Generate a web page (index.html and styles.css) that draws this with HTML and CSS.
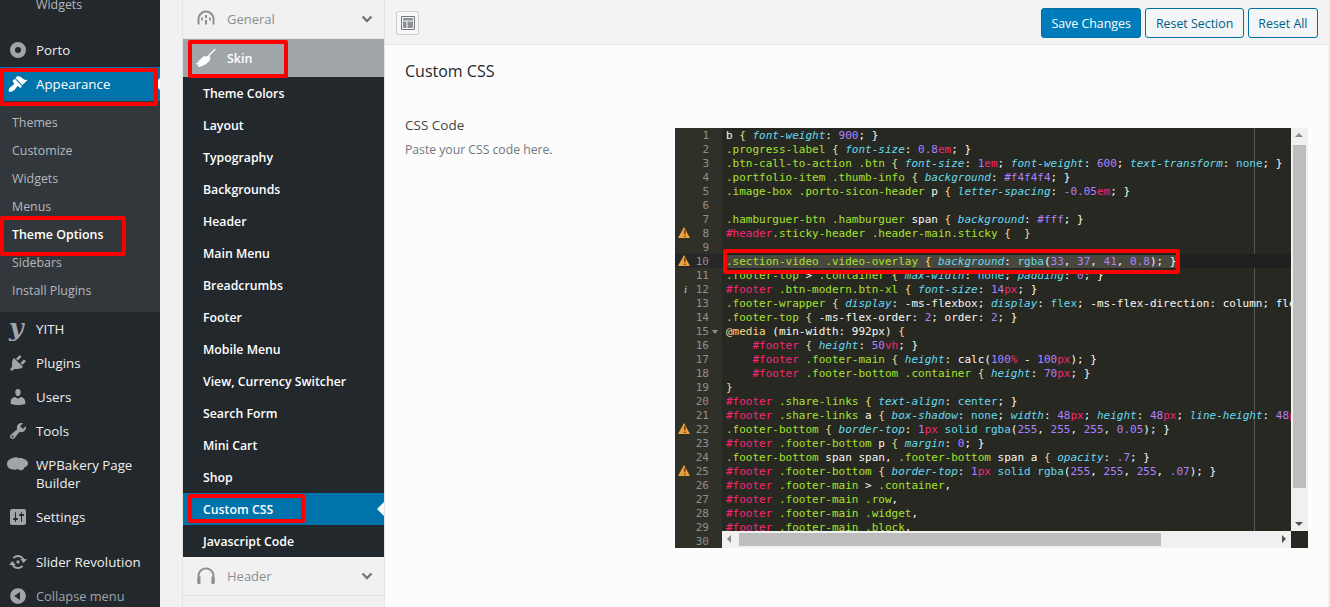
FILE: index.html
```html
<!DOCTYPE html>
<html lang="en">
<head>
  <meta charset="UTF-8">
  <title>Theme Options - Custom CSS</title>
  <link rel="stylesheet" href="styles.css">
</head>
<body>
  <nav class="adminmenu">
    <a class="sub-item sub-clip">Widgets</a>
    <div class="menu-sep"></div>
    <a class="menu-item"><svg class="mi" viewBox="0 0 20 20"><path fill-rule="evenodd" d="M10 2a8 8 0 1 1 0 16 8 8 0 0 1 0-16zm0 5a3 3 0 1 0 0 6 3 3 0 0 0 0-6z"/></svg>Porto</a>
    <a class="menu-item current"><svg class="mi" viewBox="0 0 20 20"><path d="M14.48 11.06L7.41 3.99l1.5-1.5c.5-.56 2.3-.47 3.51.32 1.21.8 1.43 1.28 2.91 2.1 1.18.64 2.45 1.26 4.45.85zm-.71.71L6.7 4.7 4.93 6.47c-.39.39-.39 1.02 0 1.41l1.06 1.06c.39.39.39 1.03 0 1.42-.6.6-1.43 1.11-2.21 1.69-.35.26-.7.53-1.01.84C1.43 13.23 0 16.53 1 17.53s4.3-.44 5.65-1.77c.31-.31.58-.66.84-1.01.58-.78 1.09-1.61 1.69-2.21.39-.39 1.03-.39 1.42 0l1.06 1.06c.39.39 1.02.39 1.41 0z"/></svg>Appearance</a>
    <div class="submenu">
      <a class="sub-item">Themes</a>
      <a class="sub-item">Customize</a>
      <a class="sub-item">Widgets</a>
      <a class="sub-item">Menus</a>
      <a class="sub-item active">Theme Options</a>
      <a class="sub-item">Sidebars</a>
      <a class="sub-item">Install Plugins</a>
    </div>
    <a class="menu-item"><span class="yith-icon">y</span>YITH</a>
    <a class="menu-item"><svg class="mi" viewBox="0 0 20 20"><path d="M13.11 4.36L9.87 7.6 8 5.73l3.24-3.24c.35-.34 1.05-.2 1.56.32.52.51.66 1.21.31 1.55zm-8 1.77l.91-1.12 9.01 9.01-1.19.84c-.71.71-2.63 1.16-3.82 1.16H6.14L4.9 17.26c-.59.59-1.54.59-2.12 0-.59-.58-.59-1.53 0-2.12l1.24-1.24v-3.88c0-1.13.4-3.19 1.09-3.89zm7.26 3.97l3.24-3.24c.34-.35 1.04-.21 1.55.31.52.51.66 1.21.31 1.55l-3.24 3.25z"/></svg>Plugins</a>
    <a class="menu-item"><svg class="mi" viewBox="0 0 20 20"><path d="M10 9.25c-2.27 0-2.73-3.44-2.73-3.44C7 4.02 7.82 2 9.97 2c2.16 0 2.98 2.02 2.71 3.81 0 0-.41 3.44-2.68 3.44zm0 2.57L12.72 10c2.39 0 4.52 2.33 4.52 4.53v2.49s-3.65 1.13-7.24 1.13c-3.65 0-7.24-1.13-7.24-1.13v-2.49c0-2.25 1.94-4.48 4.47-4.48z"/></svg>Users</a>
    <a class="menu-item"><svg class="mi" viewBox="0 0 20 20"><path d="M16.68 9.77c-1.34 1.34-3.3 1.67-4.95.99l-5.41 6.52c-.99.99-2.59.99-3.58 0s-.99-2.59 0-3.57l6.52-5.42c-.68-1.65-.35-3.61.99-4.95 1.28-1.28 3.12-1.62 4.72-1.06l-2.89 2.89 2.82 2.82 2.86-2.87c.53 1.58.18 3.39-1.08 4.65zM3.81 16.21c.4.39 1.04.39 1.43 0 .4-.4.4-1.04 0-1.43-.39-.4-1.03-.4-1.43 0-.39.39-.39 1.03 0 1.43z"/></svg>Tools</a>
    <a class="menu-item"><svg class="mi mi-wide" viewBox="0 0 22 20"><path d="M6 3c2-1.200 4.500-1 6 .3 1.500-.6 3.500-.5 4.500.7 2.500.3 4.500 2 4.500 4.300 0 2.200-1.500 3.700-3.500 4-.3 1.800-1.700 3-3.500 3-1.300 0-2.300-.5-3-1.500C9.500 14.800 8 15 6.500 14.500 3 14.500 0 12.300 0 9s3-5.500 6-6z"/></svg><span>WPBakery Page Builder</span></a>
    <a class="menu-item"><svg class="mi" viewBox="0 0 20 20"><path d="M18 16V4c0-1.100-.9-2-2-2H4c-1.100 0-2 .9-2 2v12c0 1.100.9 2 2 2h12c1.100 0 2-.9 2-2zM8 11h1c.55 0 1 .45 1 1s-.45 1-1 1H8v1.500c0 .28-.22.5-.5.5s-.5-.22-.5-.5V13H6c-.55 0-1-.45-1-1s.45-1 1-1h1V5.500c0-.28.22-.5.5-.5s.5.22.5.5V11zm5-2h-1c-.55 0-1-.45-1-1s.45-1 1-1h1V5.500c0-.28.22-.5.5-.5s.5.22.5.5V7h1c.55 0 1 .45 1 1s-.45 1-1 1h-1v5.500c0 .28-.22.5-.5.5s-.5-.22-.5-.5V9z"/></svg>Settings</a>
    <div class="menu-sep short"></div>
    <a class="menu-item"><svg class="mi mi-wide" viewBox="0 0 22 20"><path d="M11 3c2.800 0 5.200 1.700 6.200 4.100H20l-3.400 4-3.400-4h1.700C14.100 5.800 12.700 5 11 5 9.500 5 8.200 5.700 7.400 6.800L5.700 5.500C7 3.900 8.900 3 11 3zM5.400 8.900l3.400 4H7.100C7.900 14.200 9.300 15 11 15c1.500 0 2.800-.7 3.600-1.800l1.700 1.300C15 16.100 13.100 17 11 17c-2.800 0-5.200-1.700-6.200-4.100H2l3.400-4zM11 8.300a1.700 1.700 0 1 1 0 3.400 1.700 1.700 0 0 1 0-3.400z"/></svg>Slider Revolution</a>
    <a class="menu-item collapse"><svg class="mi" viewBox="0 0 20 20"><path d="M10 2.160c4.330 0 7.840 3.510 7.840 7.840s-3.510 7.840-7.840 7.840S2.160 14.330 2.160 10 5.710 2.160 10 2.160zm2 11.720V6.120L6.180 9.970z"/></svg>Collapse menu</a>
  </nav>

  <div class="wrap">
    <aside class="panel">
      <div class="group-head">
        <svg class="gi" viewBox="0 0 20 20"><path d="M1.500 15.500V10a8.500 8.500 0 0 1 17 0v5.500h-2V10a6.500 6.500 0 0 0-13 0v5.500zM9 6h2v3H9zM9 11h2v4.500H9zM5.200 8.500h1.800v3H5.200zM13 8.500h1.800v3H13z"/></svg>
        <span class="group-name">General</span>
        <svg class="chev" viewBox="0 0 12 8"><path d="M1.500 1.500L6 6l4.500-4.500" fill="none" stroke-width="2.400"/></svg>
      </div>
      <div class="group-head open">
        <svg class="gi" viewBox="0 0 20 20"><path d="M19 .5l.8.9-6.400 6.700c1 1.500 1.200 3 .4 4.400C12 15 8 17.500 3.500 19c-.7-.1-1.500-.5-2-1 1-.7 2-1.500 2.800-2.400-1 .7-2.200 1.200-3.300 1.400-.5-.6-.8-1.300-.9-2 1.500-.2 3-1 4-2-1 .4-2 .6-3 .5 2-.8 3.700-2.300 5-4 1.300-1.300 3-1.600 4.500-.8z"/></svg>
        <span class="group-name">Skin</span>
      </div>
      <ul class="sections">
        <li>Theme Colors</li>
        <li>Layout</li>
        <li>Typography</li>
        <li>Backgrounds</li>
        <li>Header</li>
        <li>Main Menu</li>
        <li>Breadcrumbs</li>
        <li>Footer</li>
        <li>Mobile Menu</li>
        <li>View, Currency Switcher</li>
        <li>Search Form</li>
        <li>Mini Cart</li>
        <li>Shop</li>
        <li class="active">Custom CSS</li>
        <li>Javascript Code</li>
      </ul>
      <div class="group-head">
        <svg class="gi" viewBox="0 0 20 20"><path d="M10 1.500c-4.700 0-8.500 3.600-8.500 8.500v2h-.3v4.500c0 .8.700 1.500 1.500 1.500h1.800v-7.500h-1V10c0-3.800 2.900-6.500 6.500-6.500s6.500 2.700 6.500 6.500v.500h-1V18h1.800c.8 0 1.500-.7 1.500-1.500V12h-.3v-2c0-4.900-3.800-8.500-8.500-8.500z"/></svg>
        <span class="group-name">Header</span>
        <svg class="chev" viewBox="0 0 12 8"><path d="M1.500 1.500L6 6l4.500-4.500" fill="none" stroke-width="2.400"/></svg>
      </div>
    </aside>

    <main class="main">
      <div class="toolbar">
        <span class="layout-btn"><svg viewBox="0 0 14 14"><path d="M.5.5h13v13H.5z" fill="none" stroke="#72777c"/><path d="M2 2h10v2.500H2zM2 5.500h3.500V12H2zM6.500 5.500H12V12H6.500z" fill="#8d9195"/></svg></span>
        <div class="actions">
          <button class="btn primary">Save Changes</button>
          <button class="btn">Reset Section</button>
          <button class="btn">Reset All</button>
        </div>
      </div>
      <div class="content">
        <h2>Custom CSS</h2>
        <div class="field">
          <div class="field-label">
            <h3>CSS Code</h3>
            <p>Paste your CSS code here.</p>
          </div>
          <div class="editor">
            <div class="gutter">
              <div>1</div><div>2</div><div>3</div><div>4</div><div>5</div><div>6</div><div>7</div>
              <div class="warn">8</div><div>9</div><div class="warn cur">10</div><div>11</div>
              <div class="info">12</div><div>13</div><div>14</div><div class="fold">15</div>
              <div>16</div><div>17</div><div>18</div><div>19</div><div>20</div><div>21</div>
              <div class="warn">22</div><div>23</div><div>24</div><div class="warn">25</div>
              <div>26</div><div>27</div><div>28</div><div>29</div><div>30</div>
            </div>
            <div class="code">
              <div class="print-margin"></div>
              <div class="ln">b <b>{</b> <em>font-weight</em>: <u>900</u>; }</div>
              <div class="ln"><s>.progress-label</s> <b>{</b> <em>font-size</em>: <u>0.8</u><i>em</i>; }</div>
              <div class="ln"><s>.btn-call-to-action</s> <s>.btn</s> <b>{</b> <em>font-size</em>: <u>1</u><i>em</i>; <em>font-weight</em>: <u>600</u>; <em>text-transform</em>: <var>none</var>; }</div>
              <div class="ln"><s>.portfolio-item</s> <s>.thumb-info</s> <b>{</b> <em>background</em>: <u>#f4f4f4</u>; }</div>
              <div class="ln"><s>.image-box</s> <s>.porto-sicon-header</s> p <b>{</b> <em>letter-spacing</em>: <u>-0.05</u><i>em</i>; }</div>
              <div class="ln"> </div>
              <div class="ln"><s>.hamburguer-btn</s> <s>.hamburguer</s> span <b>{</b> <em>background</em>: <u>#fff</u>; }</div>
              <div class="ln"><i>#header</i><s>.sticky-header</s> <s>.header-main.sticky</s> <b>{</b>  <b>}</b></div>
              <div class="ln"> </div>
              <div class="ln cur"><span class="sel"><s>.section-video</s> <s>.video-overlay</s> <b>{</b> <em>background</em>: <var>rgba</var>(<u>33</u>, <u>37</u>, <u>41</u>, <u>0.8</u>); }</span></div>
              <div class="ln"><s>.footer-top</s> &gt; <s>.container</s> <b>{</b> <em>max-width</em>: <var>none</var>; <em>padding</em>: <u>0</u>; }</div>
              <div class="ln"><i>#footer</i> <s>.btn-modern.btn-xl</s> <b>{</b> <em>font-size</em>: <u>14</u><i>px</i>; }</div>
              <div class="ln"><s>.footer-wrapper</s> <b>{</b> <em>display</em>: -ms-flexbox; <em>display</em>: <var>flex</var>; -ms-flex-direction: column; fle</div>
              <div class="ln"><s>.footer-top</s> <b>{</b> -ms-flex-order: <u>2</u>; order: <u>2</u>; }</div>
              <div class="ln"><b>@media</b> (min-width: 992px) <b>{</b></div>
              <div class="ln">    <i>#footer</i> <b>{</b> <em>height</em>: <u>50</u><i>vh</i>; }</div>
              <div class="ln">    <i>#footer</i> <s>.footer-main</s> <b>{</b> <em>height</em>: calc(<u>100</u><i>%</i> - <u>100</u><i>px</i>); }</div>
              <div class="ln">    <i>#footer</i> <s>.footer-bottom</s> <s>.container</s> <b>{</b> <em>height</em>: <u>70</u><i>px</i>; }</div>
              <div class="ln"><b>}</b></div>
              <div class="ln"><i>#footer</i> <s>.share-links</s> <b>{</b> <em>text-align</em>: <var>center</var>; }</div>
              <div class="ln"><i>#footer</i> <s>.share-links</s> a <b>{</b> <em>box-shadow</em>: <var>none</var>; <em>width</em>: <u>48</u><i>px</i>; <em>height</em>: <u>48</u><i>px</i>; <em>line-height</em>: <u>48</u><i>p</i></div>
              <div class="ln"><s>.footer-bottom</s> <b>{</b> <em>border-top</em>: <u>1</u><i>px</i> <var>solid</var> <var>rgba</var>(<u>255</u>, <u>255</u>, <u>255</u>, <u>0.05</u>); }</div>
              <div class="ln"><i>#footer</i> <s>.footer-bottom</s> p <b>{</b> <em>margin</em>: <u>0</u>; }</div>
              <div class="ln"><s>.footer-bottom</s> span span, <s>.footer-bottom</s> span a <b>{</b> <em>opacity</em>: <u>.7</u>; }</div>
              <div class="ln"><i>#footer</i> <s>.footer-bottom</s> <b>{</b> <em>border-top</em>: <u>1</u><i>px</i> <var>solid</var> <var>rgba</var>(<u>255</u>, <u>255</u>, <u>255</u>, <u>.07</u>); }</div>
              <div class="ln"><i>#footer</i> <s>.footer-main</s> &gt; <s>.container</s>,</div>
              <div class="ln"><i>#footer</i> <s>.footer-main</s> <s>.row</s>,</div>
              <div class="ln"><i>#footer</i> <s>.footer-main</s> <s>.widget</s>,</div>
              <div class="ln"><i>#footer</i> <s>.footer-main</s> <s>.block</s>,</div>
            </div>
            <div class="vbar"><span class="arrow up"></span><span class="thumb"></span><span class="arrow down"></span></div>
            <div class="hbar"><span class="arrow left"></span><span class="thumb"></span><span class="arrow right"></span></div>
            <div class="corner"></div>
          </div>
        </div>
      </div>
    </main>
  </div>

  <div class="mark mark-appearance"></div>
  <div class="mark mark-options"></div>
  <div class="mark mark-skin"></div>
  <div class="mark mark-custom"></div>
  <div class="mark mark-line"></div>
</body>
</html>
```

FILE: styles.css
```css
html, body {
  height: 607px;
  margin: 0;
  overflow: hidden;
}
body {
  display: flex;
  position: relative;
  font-family: "Open Sans", sans-serif;
  background: #f1f1f1;
}

/* admin menu */
.adminmenu {
  width: 160px;
  flex: none;
  margin-top: -9px;
  background: #23282d;
  font-size: 13.3px;
  line-height: 18px;
}
.menu-item {
  display: flex;
  padding: 8px 0 8px 36px;
  position: relative;
  color: #eee;
}
.menu-item .mi {
  position: absolute;
  left: 8px;
  top: 7px;
  width: 20px;
  height: 20px;
  fill: #a0a5aa;
}
.menu-item .mi-wide {
  width: 22px;
  left: 7px;
}
.menu-item.current {
  background: #0073aa;
  color: #fff;
}
.menu-item.current .mi {
  fill: #fff;
}
.menu-item.current::after {
  content: "";
  position: absolute;
  right: 0;
  top: 11px;
  border: 6px solid transparent;
  border-right-color: #fff;
  border-left-width: 0;
}
.menu-item.collapse {
  color: #a0a5aa;
  font-size: 12.8px;
}
.yith-icon {
  position: absolute;
  left: 9px;
  top: 3px;
  font: italic bold 25px/26px "DejaVu Serif", serif;
  color: #a0a5aa;
}
.menu-sep {
  height: 14px;
}
.menu-sep.short {
  height: 11px;
}
.submenu {
  background: #32373c;
  padding: 8px 0 7px;
}
.sub-item {
  display: block;
  padding: 5px 12px;
  color: #b4b9be;
  font-size: 12.4px;
}
.sub-item.sub-clip {
  padding-left: 36px;
}
.sub-item.active {
  color: #fff;
  font-weight: 600;
}

/* options panel */
.wrap {
  flex: 1;
  display: flex;
  padding-left: 23px;
}
.panel {
  width: 201px;
  flex: none;
  background: #f1f1f1;
  border-left: 1px solid #e2e2e2;
  margin-left: -1px;
}
.group-head {
  display: flex;
  align-items: center;
  height: 38px;
  padding: 0 11px 0 6px;
  border-bottom: 1px solid #e5e5e5;
  color: #8b8f93;
  font-size: 13px;
}
.group-head.open {
  border-bottom: 0;
  background: #a0a5a9;
  color: #fff;
  font-weight: 600;
  font-size: 12.5px;
}
.group-name {
  margin-left: 11px;
  flex: 1;
}
.gi {
  width: 20px;
  height: 20px;
  fill: #8b8f93;
  margin-left: 7px;
  flex: none;
}
.open .gi {
  fill: #fff;
}
.chev {
  width: 12px;
  height: 8px;
  stroke: #72777c;
  flex: none;
}
.sections {
  list-style: none;
  margin: 0;
  padding: 0;
  background: #23282d;
}
.sections li {
  height: 32px;
  padding-left: 20px;
  line-height: 34px;
  color: #fff;
  font-size: 12.3px;
  font-weight: 600;
  position: relative;
}
.sections li.active {
  background: #0073aa;
}
.sections li.active::after {
  content: "";
  position: absolute;
  right: 0;
  top: 9px;
  border: 7px solid transparent;
  border-right-color: #fcfcfc;
  border-left-width: 0;
}

/* main */
.main {
  flex: 1;
  background: #fcfcfc;
  border-left: 1px solid #e5e5e5;
  border-right: 1px solid #eee;
  margin-right: 1px;
}
.toolbar {
  display: flex;
  justify-content: space-between;
  align-items: center;
  height: 42px;
  padding: 2px 10px 0 11px;
  background: #f3f3f3;
  border-bottom: 1px solid #e5e5e5;
}
.layout-btn {
  display: flex;
  align-items: center;
  justify-content: center;
  width: 21px;
  height: 22px;
  border: 1px solid #cfcfcf;
  border-radius: 2px;
  background: #f7f7f7;
}
.layout-btn svg {
  width: 14px;
  height: 14px;
}
.actions {
  display: flex;
  gap: 4px;
}
.btn {
  height: 30px;
  padding: 0 9.5px;
  border: 1px solid #0071a1;
  border-radius: 3px;
  background: #f3f5f6;
  color: #016087;
  font: 12.4px "Open Sans", sans-serif;
}
.btn.primary {
  background: #007cba;
  color: #fff;
}
.content {
  padding: 0 20px;
}
.content h2 {
  margin: 16px 0 0;
  font-size: 16px;
  line-height: 20px;
  font-weight: 500;
  color: #23282d;
}
.field {
  display: flex;
  margin-top: 35px;
}
.field-label {
  width: 270px;
  flex: none;
}
.field-label h3 {
  margin: 0;
  font-size: 13.500px;
  line-height: 18px;
  font-weight: 500;
  color: #444;
}
.field-label p {
  margin: 7px 0 0;
  font-size: 12.200px;
  line-height: 18px;
  color: #72777c;
}

/* code editor */
.editor {
  width: 633px;
  height: 420px;
  margin-top: 12px;
  flex: none;
  position: relative;
  overflow: hidden;
  background: #272822;
  font: 11px/16px "DejaVu Sans Mono", monospace;
}
.gutter {
  position: absolute;
  left: 0;
  top: 0;
  bottom: 0;
  width: 47px;
  background: #2f3129;
  color: #8f908a;
  text-align: right;
}
.gutter div {
  height: 14px;
  padding-right: 13px;
  position: relative;
}
.gutter .cur {
  background: #272727;
}
.warn::before {
  content: "";
  position: absolute;
  left: 3px;
  top: 1px;
  border: 6px solid transparent;
  border-top-width: 0;
  border-bottom: 11px solid #e8a33d;
}
.warn::after {
  content: "!";
  position: absolute;
  left: 7px;
  top: 0;
  font-size: 9px;
  font-weight: bold;
  color: #3a2a10;
}
.info::before {
  content: "i";
  position: absolute;
  left: 9px;
  top: 0;
  font: italic 11px/14px "Liberation Serif", serif;
  color: #c8c8c0;
}
.fold::after {
  content: "";
  position: absolute;
  right: 4px;
  top: 6px;
  border: 3px solid transparent;
  border-top: 4px solid #8f908a;
  border-bottom-width: 0;
}
.code {
  position: absolute;
  left: 47px;
  top: 0;
  width: 569px;
  height: 403px;
  padding-left: 4px;
  box-sizing: border-box;
  overflow: hidden;
  color: #f8f8f2;
}
.print-margin {
  position: absolute;
  left: 532px;
  top: 0;
  bottom: 0;
  width: 1px;
  background: #555651;
}
.ln {
  height: 14px;
  white-space: pre;
  position: relative;
}
.ln.cur {
  background: #202020;
  margin-left: -4px;
  padding-left: 4px;
}
.sel {
  background: #49483e;
}
.ln s { text-decoration: none; color: #a6e22e; }
.ln i { font-style: normal; color: #f92672; }
.ln em { font-style: italic; color: #66d9ef; }
.ln u { text-decoration: none; color: #ae81ff; }
.ln b { font-weight: normal; color: #f2d98c; }
.ln var { font-style: normal; color: #66d9ef; }

.vbar {
  position: absolute;
  right: 0;
  top: 0;
  width: 17px;
  height: 403px;
  background: #f0f0f0;
}
.vbar .thumb {
  position: absolute;
  left: 2px;
  top: 17px;
  width: 13px;
  height: 343px;
  background: #bdbdbd;
}
.hbar {
  position: absolute;
  left: 47px;
  bottom: 0;
  width: 569px;
  height: 17px;
  background: #f0f0f0;
}
.hbar .thumb {
  position: absolute;
  left: 17px;
  top: 2px;
  width: 422px;
  height: 13px;
  background: #bdbdbd;
}
.corner {
  position: absolute;
  right: 0;
  bottom: 0;
  width: 17px;
  height: 17px;
  background: #272822;
}
.arrow {
  position: absolute;
  border: 4px solid transparent;
}
.arrow.up {
  left: 4px;
  top: 5px;
  border-bottom-color: #8a8a8a;
  border-top-width: 0;
}
.arrow.down {
  left: 4px;
  bottom: 5px;
  border-top-color: #505050;
  border-bottom-width: 0;
}
.arrow.left {
  left: 5px;
  top: 4px;
  border-right-color: #8a8a8a;
  border-left-width: 0;
}
.arrow.right {
  right: 5px;
  top: 4px;
  border-left-color: #505050;
  border-right-width: 0;
}

/* red annotation boxes drawn on top of the screenshot */
.mark {
  position: absolute;
  border: 4px solid #f00;
  border-radius: 2px;
  box-sizing: border-box;
  pointer-events: none;
}
.mark-appearance { left: 0; top: 68px; width: 158px; height: 38px; }
.mark-options { left: 0; top: 216px; width: 126px; height: 40px; }
.mark-skin { left: 188px; top: 40px; width: 100px; height: 38px; }
.mark-custom { left: 188px; top: 494px; width: 117px; height: 29px; }
.mark-line { left: 723px; top: 249px; width: 457px; height: 25px; }
```
